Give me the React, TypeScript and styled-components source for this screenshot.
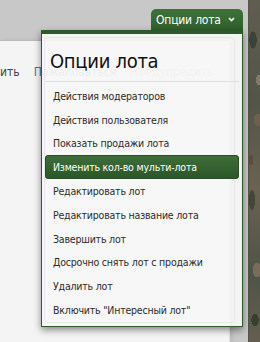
import React from "react";
import styled, { createGlobalStyle } from "styled-components";

const Global = createGlobalStyle`
  html, body { margin: 0; padding: 0; }
  body { width: 260px; height: 342px; overflow: hidden; font-family: "DejaVu Sans Condensed", "DejaVu Sans", sans-serif; }
`;

const Page = styled.div`
  display: flex;
  width: 260px;
  height: 342px;
`;

const Main = styled.div`
  width: 248px;
  display: flex;
  flex-direction: column;
  background: #c8c8c8;
`;

const Texture = styled.div`
  flex: 1;
  border-left: 1px solid #55554d;
  background:
    radial-gradient(ellipse 6px 14px at 4px 40px, #394338 60%, transparent 62%),
    radial-gradient(ellipse 7px 10px at 9px 120px, #6e5f50 60%, transparent 62%),
    radial-gradient(ellipse 5px 16px at 3px 200px, #424739 60%, transparent 62%),
    radial-gradient(ellipse 7px 12px at 8px 270px, #7a6b5a 60%, transparent 62%),
    radial-gradient(ellipse 6px 10px at 6px 320px, #36402f 60%, transparent 62%),
    radial-gradient(ellipse 5px 9px at 10px 80px, #7f7a6a 60%, transparent 62%),
    radial-gradient(ellipse 4px 8px at 2px 160px, #5d4c40 60%, transparent 62%),
    linear-gradient(180deg, #5f5d50, #525548 30%, #6a6252 55%, #4f5448 80%, #645e50);
`;

const Header = styled.div`
  height: 40px;
  display: flex;
  justify-content: flex-end;
  align-items: flex-end;
  padding-right: 5px;
  position: relative;
  z-index: 2;
`;

const Dropdown = styled.div`
  position: relative;
  margin-bottom: 10px;
`;

const Tab = styled.button`
  display: flex;
  align-items: center;
  gap: 7px;
  height: 21px;
  width: 92px;
  padding: 0 0 0 5px;
  border: 0;
  border-radius: 5px 5px 0 0;
  background: linear-gradient(180deg, #3f7239 0%, #2f5f2c 100%);
  color: #fff;
  font-family: "DejaVu Sans Condensed", "DejaVu Sans", sans-serif;
  font-size: 12px;
  letter-spacing: -0.2px;
  cursor: pointer;
`;

const Menu = styled.div`
  position: absolute;
  top: 100%;
  right: 0;
  width: 196px;
  border: 1px solid #2c5a2a;
  border-top: 4px solid #2c5a2a;
  background: rgba(246, 246, 246, 0.93);
  box-shadow: 0 3px 7px rgba(0, 0, 0, 0.45);
  padding: 3px 2px 3px 2px;
`;

const Inner = styled.div`
  border: 1px solid rgba(0, 0, 0, 0.05);
  border-radius: 4px;
  margin-right: 5px;
`;

const Title = styled.div`
  height: 44px;
  display: flex;
  align-items: center;
  padding-left: 5px;
  padding-top: 2px;
  box-sizing: border-box;
  font-family: "DejaVu Sans Condensed", "DejaVu Sans", sans-serif;
  font-size: 20px;
  letter-spacing: -0.3px;
  color: #111;
  border-bottom: 1px solid #dedede;
  margin-right: -5px;
`;

const List = styled.ul`
  list-style: none;
  margin: 0;
  padding: 2px 0 0 0;
  margin-right: -5px;
`;

const Item = styled.li<{ $active?: boolean }>`
  height: 23.8px;
  display: flex;
  align-items: center;
  padding-left: 8px;
  font-size: 10.5px;
  letter-spacing: -0.2px;
  color: ${(p) => (p.$active ? "#fff" : "#2b2b2b")};
  border-radius: 4px;
  background: ${(p) =>
    p.$active ? "linear-gradient(180deg, #3e6f3a 0%, #2b5628 100%)" : "transparent"};
  box-shadow: ${(p) => (p.$active ? "inset 0 0 0 1px #2a4f27" : "none")};
`;

const Panel = styled.div`
  width: 229px;
  flex: 1;
  background: #f4f4f4;
  border-top: 1px solid #b9b9b9;
  box-shadow: 1px 0 0 #e2e2e2, 4px 0 4px rgba(0, 0, 0, 0.08);
  overflow: hidden;
`;

const Links = styled.div`
  display: flex;
  gap: 14px;
  padding-top: 24px;
  font-size: 12px;
  white-space: nowrap;
`;

const Link = styled.span<{ $tone: "dark" | "blue" | "muted" }>`
  color: ${(p) => (p.$tone === "dark" ? "#444" : p.$tone === "blue" ? "#4f7393" : "#b5b5b5")};
`;

const Chevron = () => (
  <svg width="7" height="5" viewBox="0 0 7 5">
    <polyline points="1,1 3.5,3.5 6,1" fill="none" stroke="#fff" strokeWidth="1.6" />
  </svg>
);

const items = [
  "Действия модераторов",
  "Действия пользователя",
  "Показать продажи лота",
  "Изменить кол-во мульти-лота",
  "Редактировать лот",
  "Редактировать название лота",
  "Завершить лот",
  "Досрочно снять лот с продажи",
  "Удалить лот",
  'Включить "Интересный лот"',
];

export default function App() {
  return (
    <>
      <Global />
      <Page>
        <Main>
          <Header>
            <Dropdown>
              <Tab>
                Опции лота <Chevron />
              </Tab>
              <Menu>
                <Inner>
                  <Title>Опции лота</Title>
                  <List>
                    {items.map((t, i) => (
                      <Item key={t} $active={i === 3}>
                        {t}
                      </Item>
                    ))}
                  </List>
                </Inner>
              </Menu>
            </Dropdown>
          </Header>
          <Panel>
            <Links>
              <Link $tone="dark">ить</Link>
              <Link $tone="blue">Пожаловаться</Link>
              <Link $tone="muted">Предупредить</Link>
            </Links>
          </Panel>
        </Main>
        <Texture />
      </Page>
    </>
  );
}
